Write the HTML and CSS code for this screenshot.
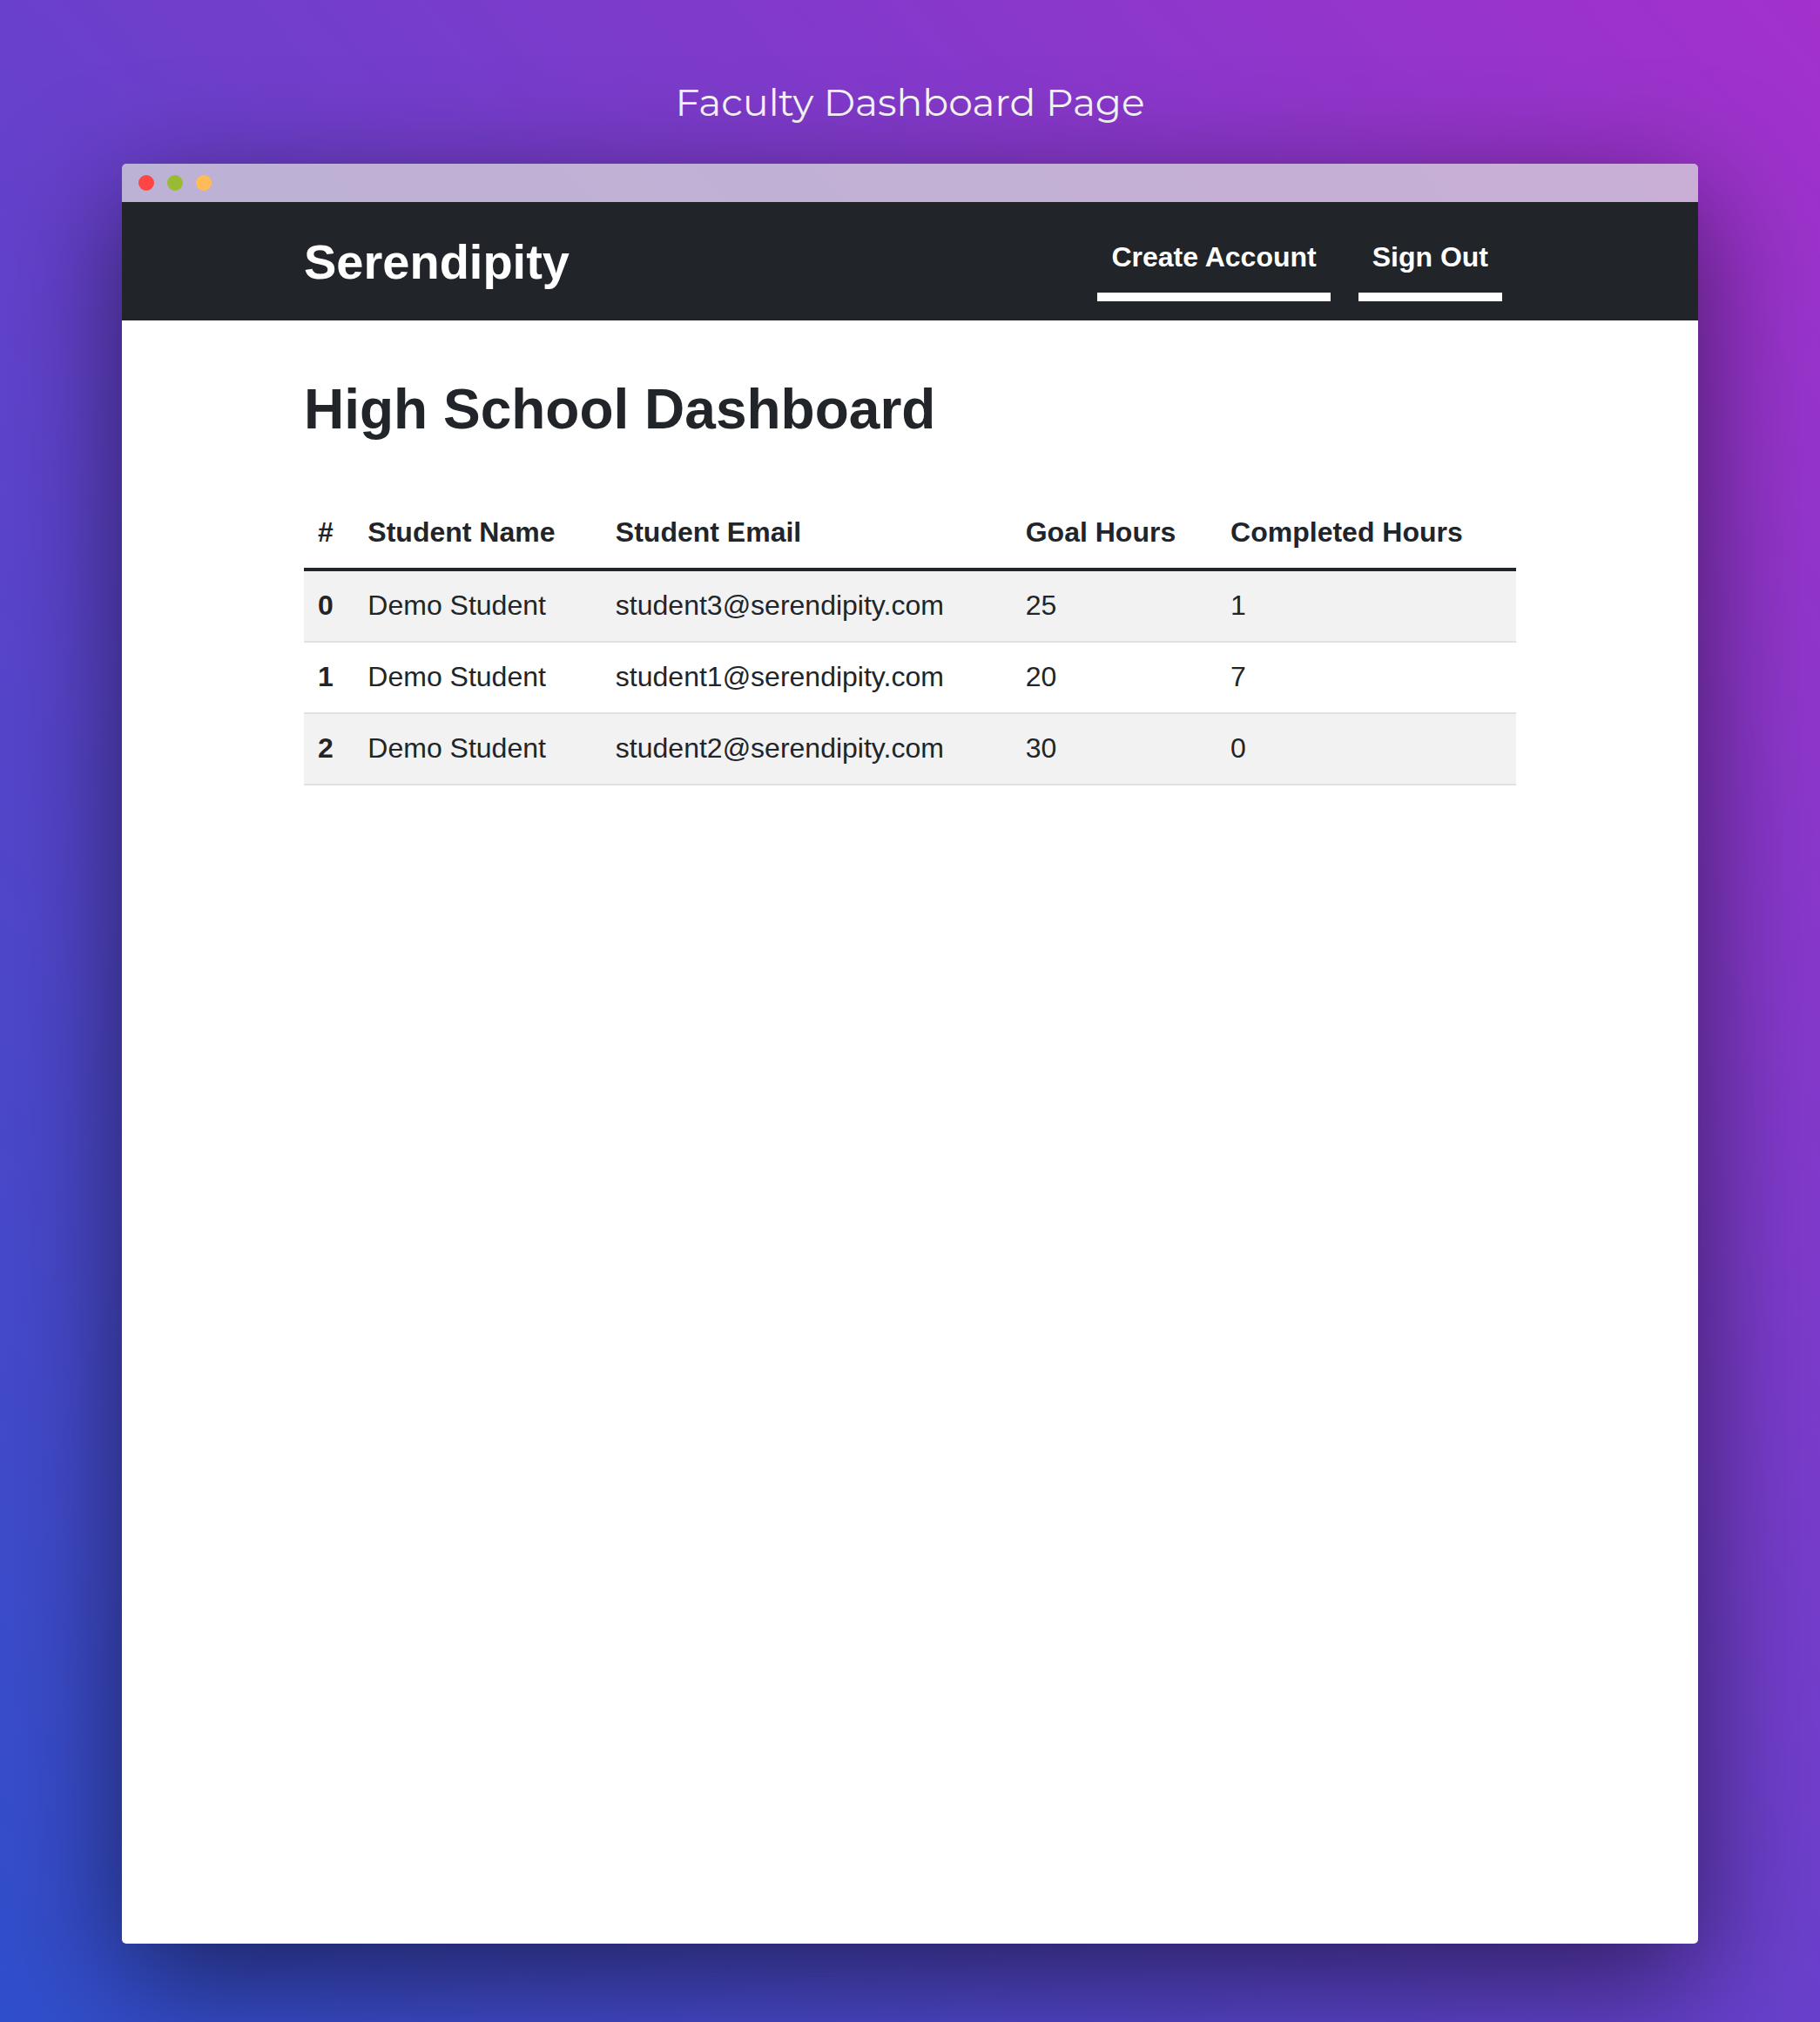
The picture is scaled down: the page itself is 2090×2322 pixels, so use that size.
FILE: index.html
```html
<!DOCTYPE html>
<html lang="en">
<head>
  <meta charset="utf-8">
  <meta name="viewport" content="width=device-width, initial-scale=1">
  <title>Faculty Dashboard Page</title>
  <link rel="stylesheet" href="styles.css">
</head>
<body class="page">
  <p class="caption">Faculty Dashboard Page</p>
  <div class="window">
    <div class="titlebar">
      <span class="dot dot-red"></span>
      <span class="dot dot-green"></span>
      <span class="dot dot-orange"></span>
    </div>
    <header class="header">
      <div class="container header-inner">
        <a class="brand" href="#">Serendipity</a>
        <nav class="nav">
          <a class="nav-link" href="#">Create Account</a>
          <a class="nav-link" href="#">Sign Out</a>
        </nav>
      </div>
    </header>
    <main class="main">
      <div class="container">
        <h1 class="heading">High School Dashboard</h1>
        <table class="table">
          <thead>
            <tr>
              <th scope="col">#</th>
              <th scope="col">Student Name</th>
              <th scope="col">Student Email</th>
              <th scope="col">Goal Hours</th>
              <th scope="col">Completed Hours</th>
            </tr>
          </thead>
          <tbody>
            <tr>
              <th scope="row">0</th>
              <td>Demo Student</td>
              <td>student3@serendipity.com</td>
              <td>25</td>
              <td>1</td>
            </tr>
            <tr>
              <th scope="row">1</th>
              <td>Demo Student</td>
              <td>student1@serendipity.com</td>
              <td>20</td>
              <td>7</td>
            </tr>
            <tr>
              <th scope="row">2</th>
              <td>Demo Student</td>
              <td>student2@serendipity.com</td>
              <td>30</td>
              <td>0</td>
            </tr>
          </tbody>
        </table>
      </div>
    </main>
  </div>
</body>
</html>
```
FILE: styles.css
```css
* {
  box-sizing: border-box;
}

.page {
  display: flex;
  flex-direction: column;
  min-height: 100vh;
  margin: 0;
  padding: 87px 140px 90px;
  background: linear-gradient(to top right, #304fcc, #a331cb);
  color: #212529;
  font-family: "Helvetica Neue", "Liberation Sans", Arial, sans-serif;
  font-size: 32px;
  line-height: 48px;
}

.caption {
  margin: 0 0 41px;
  color: #f8f8f8;
  font-family: Montserrat, Inter, sans-serif;
  font-size: 44px;
  font-weight: 400;
  line-height: 60px;
  text-align: center;
}

.window {
  display: flex;
  flex: 1;
  flex-direction: column;
  overflow: hidden;
  border-radius: 5px;
  box-shadow: 0 40px 136px rgba(0, 0, 0, 0.55);
}

.titlebar {
  display: flex;
  align-items: center;
  gap: 15px;
  height: 44px;
  padding: 0 19px;
  background: rgba(216, 216, 216, 0.75);
}

.dot {
  width: 18px;
  height: 18px;
  border-radius: 50%;
}

.dot-red {
  background: #ff4444;
}

.dot-green {
  background: #99bb33;
}

.dot-orange {
  background: #ffbb55;
}

.container {
  width: 100%;
  max-width: 1392px;
  margin: 0 auto;
}

.header {
  padding: 17px 32px 15px;
  background: #212529;
}

.header-inner {
  display: flex;
  justify-content: space-between;
}

.brand {
  color: #ffffff;
  font-size: 56px;
  font-weight: 700;
  line-height: 104px;
  text-decoration: none;
}

.nav {
  display: flex;
  align-items: flex-start;
  gap: 32px;
  padding: 7px 16px 0;
}

.nav-link {
  padding: 15px 16px 17px;
  border-bottom: 10px solid #ffffff;
  color: #ffffff;
  font-weight: 700;
  text-decoration: none;
}

.main {
  flex: 1;
  padding: 64px 32px;
  background: #ffffff;
}

.heading {
  margin: 0 0 64px;
  font-size: 64px;
  line-height: 76px;
}

.table {
  width: 100%;
  border-spacing: 0;
}

.table th,
.table td {
  padding: 15px 16px 17px;
  border-bottom: 2px solid #dee2e6;
  text-align: left;
}

.table thead th {
  border-bottom: 4px solid #212529;
}

.table tbody tr:nth-child(odd) {
  background: #f2f2f2;
}
```
